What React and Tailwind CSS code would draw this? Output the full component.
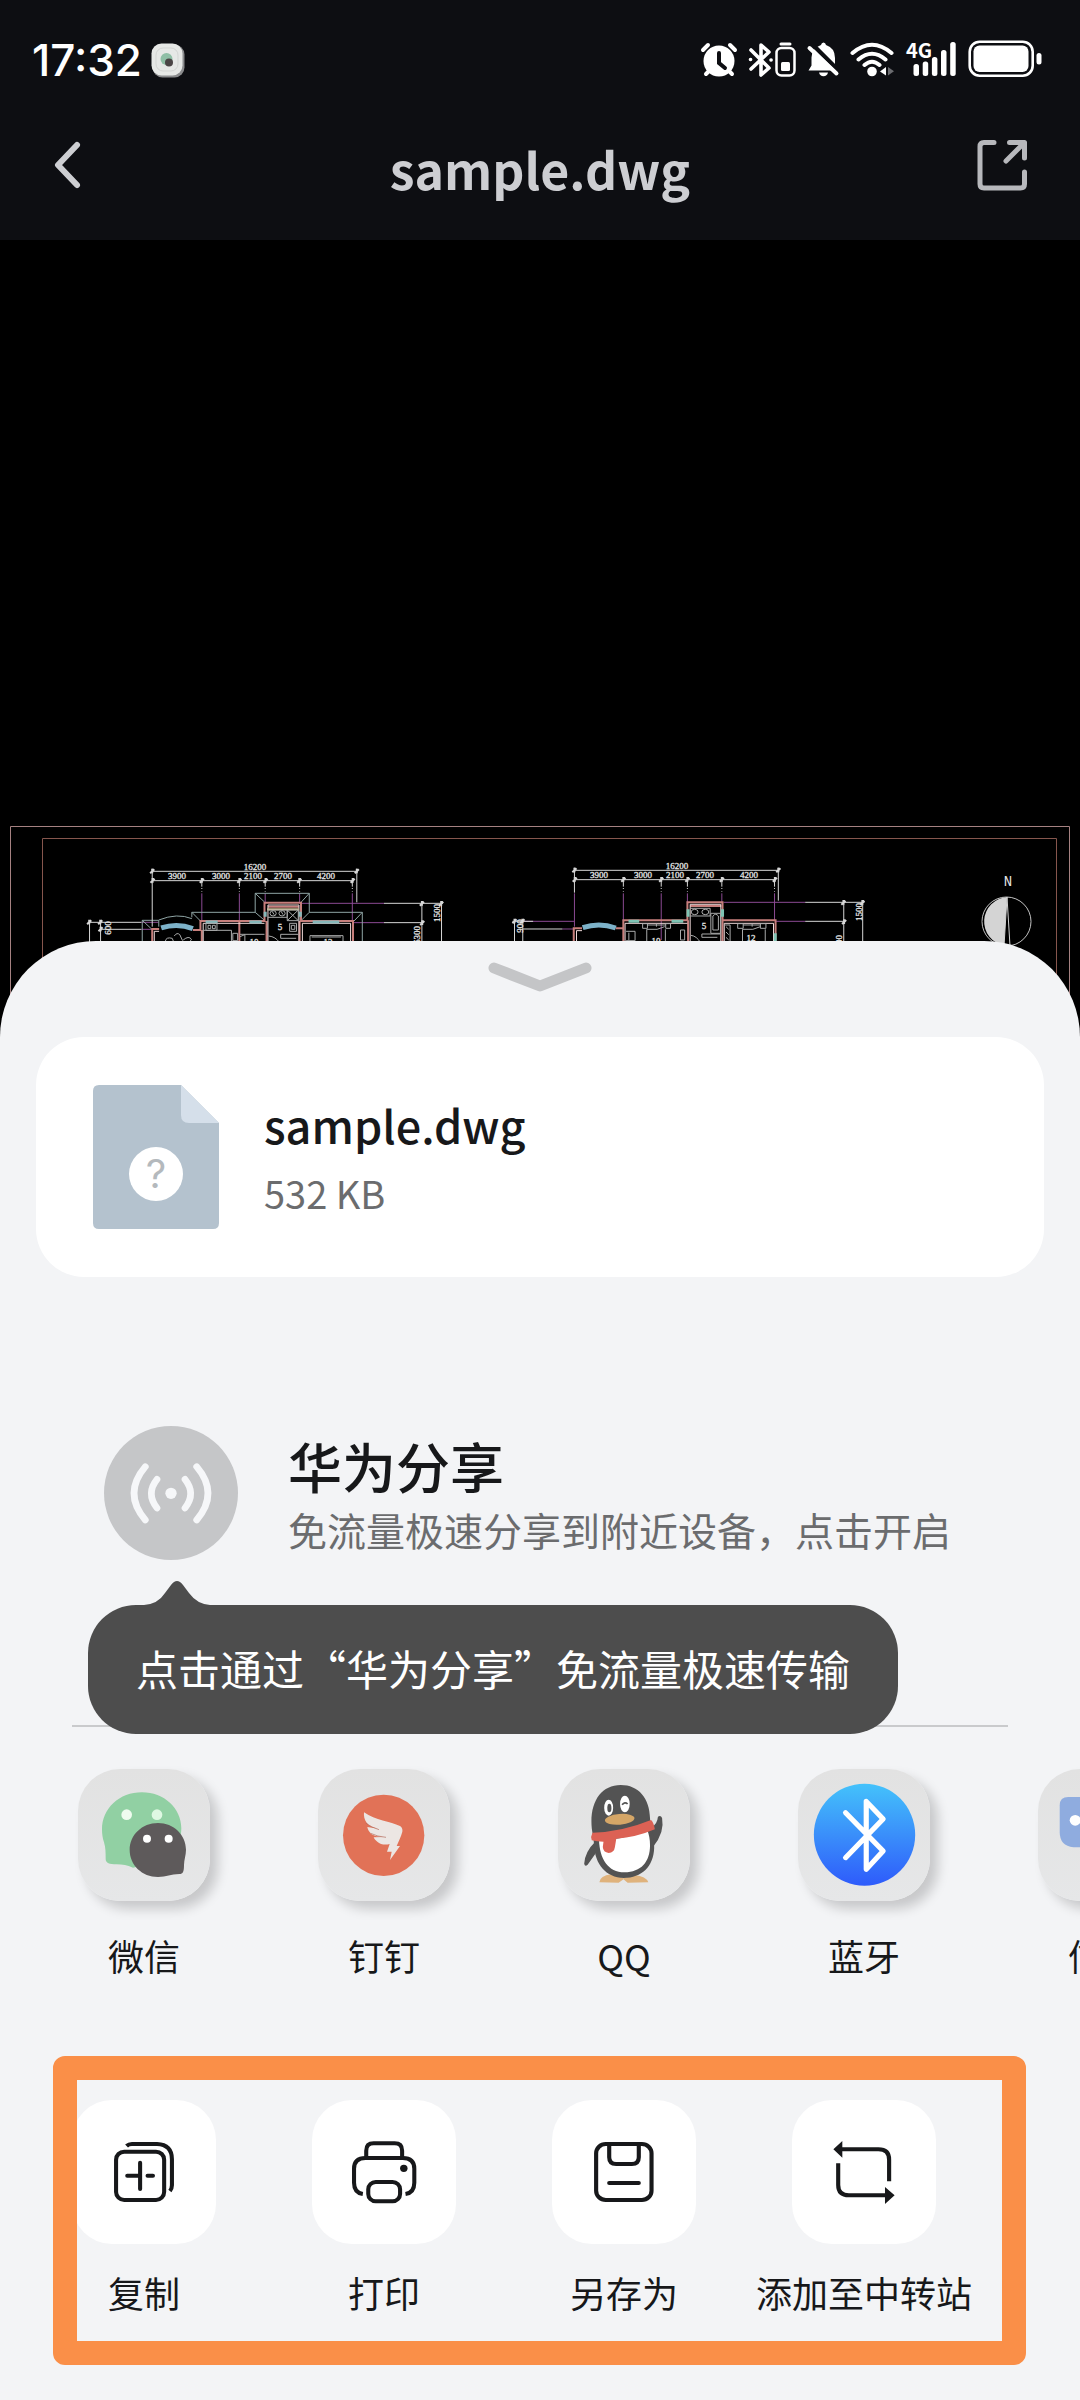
import React from "react";
import clsx from "clsx";

const line = { vectorEffect: "non-scaling-stroke" };

/* ================= STATUS BAR ================= */
const StatusIcons = () => (
  <div className="flex items-center text-white">
    <svg className="w-11 h-10" viewBox="701 39 44 40" fill="none" stroke="currentColor" strokeWidth="4" strokeLinecap="round">
      <circle cx="720" cy="60" r="15.500" fill="currentColor" stroke="none" />
      <path d="M704 49l5-5M731 44l5 5M707 73l4-4M733 73l-4-4" />
      <path d="M720 52v10l6 5" stroke="#0d0e12" />
    </svg>
    <svg className="w-14 h-10" viewBox="745 39 56 40" fill="none" stroke="currentColor" strokeWidth="3.6" strokeLinecap="round" strokeLinejoin="round">
      <path d="M752 49l18 18-8 7V44l8 7-18 17" />
      <path d="M751.500 58.500h.1M772 59h.1" />
      <rect x="777.500" y="47" width="18" height="27.500" rx="5" strokeWidth="2.500" />
      <path d="M782 43h9" strokeWidth="3" />
      <rect x="782" y="61" width="9" height="9" rx="1.500" fill="currentColor" stroke="none" />
    </svg>
    <svg className="w-11 h-10" viewBox="801 39 44 40">
      <path d="M824.500 41.500q2 0 2.500 2.500q9 3 9 13v8l3.500 4.500h-30l3-5v-8q0-9 9.500-12.500q.5-2.500 2.500-2.500z" fill="currentColor" />
      <path d="M820 71.500h9q-1 3.800-4.500 3.800t-4.500-3.800z" fill="currentColor" />
      <path d="M813 43l29 29" stroke="#0d0e12" strokeWidth="4.500" />
      <path d="M810.500 47l27 25.500" stroke="currentColor" strokeWidth="4" strokeLinecap="round" />
    </svg>
    <svg className="w-14 h-10" viewBox="845 39 56 40" fill="none" stroke="currentColor" strokeWidth="4" strokeLinecap="round">
      <path d="M853.500 52q19.500-16.500 39 0M859.500 58.500q13.500-11.500 27 0M865.500 64q7.500-6.500 15 0" />
      <circle cx="873" cy="70.500" r="4.800" fill="currentColor" stroke="none" />
      <path d="M881 70.500l6-4.500v8.500z" fill="currentColor" stroke="none" />
      <path d="M889 66v8.500l6-4.300z" fill="#6b6c70" stroke="none" />
    </svg>
    <div className="relative h-10 w-15">
      <span className="absolute left-1.5 top-0 font-['Noto_Sans_CJK_SC',sans-serif] text-xl leading-5 font-bold">4G</span>
      <svg className="h-10 w-15" viewBox="901 39 60 40" fill="currentColor">
        <rect x="914.500" y="63" width="5.500" height="12" rx="2.500" />
        <rect x="923.700" y="60.500" width="5.500" height="14.500" rx="2.500" />
        <rect x="932.900" y="56" width="5.500" height="19" rx="2.500" />
        <rect x="942" y="49" width="5.500" height="26" rx="2.500" />
        <rect x="951.200" y="41" width="5.500" height="34" rx="2.500" />
      </svg>
    </div>
    <svg className="w-21 h-10" viewBox="961 39 84 40" fill="currentColor">
      <rect x="970.700" y="40.700" width="63" height="34" rx="10" fill="none" stroke="currentColor" strokeWidth="2.600" />
      <rect x="974.500" y="44.500" width="55" height="26.500" rx="6" />
      <rect x="1037.500" y="52" width="5" height="11.500" rx="2.500" />
    </svg>
  </div>
);

const MiniAppIcon = () => (
  <svg className="w-9 h-9" viewBox="0 0 36 36">
    <rect x="2.500" y="2.500" width="32" height="33" rx="10" fill="#8b8c8e" />
    <rect x="1.500" y="1.500" width="31" height="32" rx="10" fill="#e6e8e6" />
    <rect x="6" y="6" width="22" height="23" rx="7" fill="none" stroke="#d3d5d3" />
    <circle cx="16.500" cy="17" r="6" fill="#8fbfa6" />
    <circle cx="19" cy="20.500" r="4" fill="#4b4546" />
  </svg>
);

/* ================= DRAWING ================= */
const Ticks = ({ xs, y }) =>
  xs.map((x) => <path key={x} d={`M${x - 6} ${y + 6}l12-12M${x} ${y - 8}v14`} strokeWidth="2" {...line} />);

const DimText = ({ items }) =>
  items.map(([x, y, text, rotate]) => (
    <text key={`${x}-${y}`} textAnchor="middle" transform={`translate(${x} ${y}) rotate(${rotate || 0})`}>
      {text}
    </text>
  ));

const Drawing = () => (
  <svg className="block w-full" viewBox="0 240 1080 797" fill="none">
    <path d="M10.500 1037V826.500H1069.500V1037" stroke="#a58181" />
    <path d="M42.500 1037V838.500H1056.500V1037" stroke="#86564d" />

    {/* left plan */}
    <g transform="translate(0 810) scale(.3444 .3333)">
      <g stroke="#8b4a93" strokeWidth="1">
        <path d="M586 250V333M695 250V390M770 250V280M870 250V280M1023 250V333M875 280H1115M1028 338H1115M410 337H460M410 358H442" {...line} />
      </g>
      <g stroke="#8fa5a5" strokeWidth="1">
        <path d="M413 400V331H461V350M461 330Q515 308 557 326M557 322V307H741V250H898V307H1052V400M741 250L768 276M898 250L875 276M557 307L582 333M1052 307L1028 333M413 331L440 357M741 307L768 331M898 307L875 331" {...line} />
      </g>
      <g stroke="#c77f7c" strokeWidth="2">
        <path d="M442 400V357H462M560 360H582V333H768V278H874V333H1025V400M586 360V400M695 333V400M774 333V400M870 333V400M778 290H868" {...line} />
      </g>
      <g stroke="#f0dada" strokeWidth="1">
        <path d="M448 400V364H462M590 400V340H768M778 400V285H868V400M878 400V340H1018V400" {...line} />
      </g>
      <path d="M468 354Q515 338 560 356" stroke="#7db2c9" strokeWidth="5" {...line} />
      <path d="M597 336H632M724 336H760M908 336H985M770 305V320M872 305V320" stroke="#86b7b9" strokeWidth="3" {...line} />
      <path d="M776 298H868" stroke="#d9c79a" strokeWidth="2" {...line} />
      <g stroke="#a9aaaa" strokeWidth="1">
        <path d="M598 340H630V361H598zM604 346h8v10h-8zM617 346h8v10h-8zM590 361H672V395M676 370H690V392H676zM697 373H768M778 300H834V322H778M834 300H866V332H834zM834 300L866 332M866 300L834 332M841 340H861V364H841zM846 346h10v12h-10zM815 373H866M815 373V385H860M780 378Q800 380 812 398M900 400V377H996V400M905 381H990M480 394Q482 380 500 385L506 400M506 378Q514 366 522 374L530 392M532 390Q548 376 556 388L548 400" {...line} />
        <ellipse cx="793" cy="310" rx="9" ry="8" {...line} />
        <ellipse cx="819" cy="310" rx="9" ry="8" {...line} />
        <path d="M697 380l14-6v20M790 304l6 10M816 304l6 10" {...line} />
      </g>
      <g stroke="#d6d6d6" strokeWidth="1">
        <path d="M442 184H1036M442 212H1025M442 176V350M1036 176V277M586 212V230M695 212V230M770 212V230M870 212V230M1023 212V230M1115 280H1286M1115 338H1228M1225 280V400M1282 280V400M255 337H410M290 358H410M260 337V400M292 337V400" {...line} />
        <path d="M586 234V245M695 234V245M770 234V245M870 234V245M1023 234V245" strokeDasharray="1 2" {...line} />
        <Ticks xs={[442, 1036]} y={184} />
        <Ticks xs={[443, 586, 695, 771, 869, 1024]} y={212} />
        <Ticks xs={[1225, 1281]} y={281} />
        <Ticks xs={[1226]} y={339} />
        <Ticks xs={[259, 291]} y={337} />
        <Ticks xs={[292]} y={358} />
      </g>
    </g>

    {/* right plan */}
    <g transform="translate(540 810) scale(.3444 .3333)">
      <g stroke="#8b4a93" strokeWidth="1">
        <path d="M100 250V350M242 250V333M352 250V390M428 250V280M528 250V280M681 250V333M533 277H770M685 334H770M0 334H100M65 357H100M-50 334H0" {...line} />
      </g>
      <g stroke="#c77f7c" strokeWidth="2">
        <path d="M98 400V355H122M220 355H242V331H428V277H530V331H684V400M242 331V400M430 331V400M530 331V400M436 288H526" {...line} />
      </g>
      <g stroke="#f0dada" strokeWidth="1">
        <path d="M106 400V362H122M247 400V340H428M436 400V283H525V400M535 400V340H678V400" {...line} />
      </g>
      <path d="M124 353Q172 336 220 354" stroke="#7db2c9" strokeWidth="5" {...line} />
      <path d="M257 334H288M382 334H416M430 298V320M530 298V320M683 370V400" stroke="#7fc4b4" strokeWidth="3" {...line} />
      <g stroke="#a9aaaa" strokeWidth="1">
        <path d="M436 295H494V318H436M496 310H524V370H496zM502 318Q510 308 518 318V360H502zM470 372H524M470 372V382H515M438 376Q455 378 466 398M250 364H276V392H250M258 368V390M298 341H312V355H298zM365 341H379V355H365zM312 345H365M310 400V358H340L362 350M364 358V400M574 341H590V355H574zM640 341H656V355H640zM590 345H640M588 400V358H618L640 350M654 358V400M408 360H420V390H408zM536 345H552V400M540 350l8 8M540 366l8 8M540 382l8 8M338 341V350M616 341V350" {...line} />
        <ellipse cx="449" cy="306" rx="10" ry="8" {...line} />
        <ellipse cx="480" cy="306" rx="10" ry="8" {...line} />
      </g>
      <g stroke="#d6d6d6" strokeWidth="1">
        <path d="M100 181H692M100 209H681M100 173V248M692 173V272M242 209V230M352 209V230M428 209V230M528 209V230M681 209V230M770 277H942M770 334H886M882 277V400M937 277V400M-80 334H-20M-50 357H65M-74 334V400M-50 334V400" {...line} />
        <path d="M242 234V245M352 234V245M428 234V245M528 234V245M681 234V245" strokeDasharray="1 2" {...line} />
        <Ticks xs={[100, 692]} y={181} />
        <Ticks xs={[101, 242, 352, 428, 528, 682]} y={209} />
        <Ticks xs={[881, 936]} y={278} />
        <Ticks xs={[883]} y={336} />
        <Ticks xs={[-74, -51]} y={334} />
      </g>
    </g>

    <g className="font-['Liberation_Serif',serif] text-[9px]" fill="#e4e4e4" stroke="#e4e4e4" strokeWidth=".3">
      <DimText
        items={[
          [255, 870, "16200"],
          [177, 879, "3900"],
          [221, 879, "3000"],
          [253, 879, "2100"],
          [283, 879, "2700"],
          [326, 879, "4200"],
          [440, 913, "1500", -90],
          [420, 935, "6300", -90],
          [111, 928, "600", -90],
          [280, 930, "5"],
          [254, 945, "10"],
          [328, 945, "12"],
          [677, 869, "16200"],
          [599, 878, "3900"],
          [643, 878, "3000"],
          [675, 878, "2100"],
          [705, 878, "2700"],
          [749, 878, "4200"],
          [862, 912, "1500", -90],
          [842, 944, "6300", -90],
          [523, 926, "900", -90],
          [704, 929, "5"],
          [656, 944, "10"],
          [751, 941, "12"],
        ]}
      />
    </g>
    <text x="1008" y="886" textAnchor="middle" className="font-['Liberation_Mono',monospace] text-sm" fill="#e4e4e4">N</text>

    {/* compass */}
    <path d="M1007 897A24.500 24.500 0 0 0 1004 945.500z" fill="#d4d4d4" />
    <circle cx="1006.500" cy="921.500" r="24.500" stroke="#c4c4c4" />
    <path d="M1007 897L1010 946M1007 897L1004 946" stroke="#d4d4d4" />
  </svg>
);

/* ================= SHARE TARGETS ================= */
const WechatIcon = () => (
  <svg className="size-full" viewBox="85 87 396 396">
    <path d="M277 157c66 0 118 48 118 108s-50 114-118 114c-12 0-18 4-27 4-18-7-30-10-50-10-20 0-32-4-32-16 0-18 0-34-5-50-4-12-6-26-6-38 0-64 52-112 120-112z" fill="#91d0a3" />
    <circle cx="231" cy="224" r="16" fill="#effbef" />
    <circle cx="322" cy="224" r="16" fill="#dff8e3" />
    <path d="M325 249c47 0 84 36 84 80 0 16-6 30-6 46 0 20-3 27-14 27-26 0-38 9-64 9-48 0-85-36-85-81s37-81 85-81z" fill="#5e5a5b" />
    <circle cx="292" cy="296" r="12" fill="#fff" />
    <circle cx="357" cy="296" r="12" fill="#fff" />
  </svg>
);

const DingTalkIcon = () => (
  <svg className="size-full" viewBox="804 87 396 396">
    <circle cx="1001" cy="286" r="122" fill="#e17257" />
    <path d="M942 217c35 24 79 28 108 41q9 6 7 17c-4 16-11 28-17 43h10l-30 42 5-25h-14l8-23c-14 4-28 1-37-7-6-4-9-8-11-13l34-1c-18-1-31-2-42-10-6-6-10-13-11-20l34 5c-17-4-29-8-36-18-7-9-9-20-8-31z" fill="#ece6e3" />
    <path d="M947 249q18 14 40 20M962 280q20 10 46 12" stroke="#b06a5a" strokeWidth="2" fill="none" />
  </svg>
);

const QQIcon = () => (
  <svg className="size-full" viewBox="52 87 383 396" preserveAspectRatio="none">
    <path d="M172 427q2-20 34-24l36 12 32-10q34 4 40 22l-60 1-12-10-14 10z" fill="#dfb27c" />
    <path d="M160 305q-30 30-32 66 2 10 10 3l22-32zM322 262q18-8 20-32 8-6 12 4 8 44-26 86z" fill="#535353" />
    <path d="M234 135c52 0 84 40 85 100 0 20 14 50 12 90-2 55-36 89-88 89s-84-44-86-95c-1-30-8-44-8-74 0-66 32-110 85-110z" fill="#535353" />
    <path d="M171 300q70 0 140-30 8 20 8 46c0 50-26 81-74 81s-72-40-74-97z" fill="#fff" />
    <path d="M152 278q85-2 170-38 8 8 11 28-54 24-112 28-2 14-4 26-2 16-18 17-16-2-17-18l2-16q-20 0-34-4-4-12 2-23z" fill="#dc6154" />
    <ellipse cx="199" cy="203" rx="13" ry="24" fill="#fff" />
    <ellipse cx="246" cy="192" rx="14" ry="25" fill="#fff" />
    <ellipse cx="201" cy="204" rx="6" ry="13" fill="#535353" />
    <path d="M238 194q8-10 16-2" stroke="#535353" strokeWidth="5" fill="none" />
    <ellipse cx="231" cy="238" rx="43" ry="16" fill="#d5a667" transform="rotate(-5 231 238)" />
  </svg>
);

const BluetoothIcon = () => (
  <svg className="size-full" viewBox="748 87 383 396" preserveAspectRatio="none">
    <defs>
      <linearGradient id="bt" x1="0" y1="0" x2="0" y2="1">
        <stop offset="0" stopColor="#44c2fb" />
        <stop offset=".5" stopColor="#3a8ffa" />
        <stop offset="1" stopColor="#2e5bfb" />
      </linearGradient>
    </defs>
    <ellipse cx="941" cy="284" rx="147" ry="153" fill="url(#bt)" />
    <path d="M886 218L995 333L946 388V184L995 237L886 353" fill="none" stroke="#fff" strokeWidth="15" strokeLinecap="round" strokeLinejoin="round" />
  </svg>
);

const MessageIcon = () => (
  <svg className="size-full" viewBox="1447 87 383 396" preserveAspectRatio="none">
    <path d="M1535 171H1742q25 0 25 25V282q0 40-40 40H1550q-40-4-40-45V196q0-25 25-25z" fill="#8facdf" />
    <circle cx="1555" cy="241" r="16" fill="#fff" />
    <circle cx="1638" cy="241" r="16" fill="#fff" />
    <circle cx="1721" cy="241" r="16" fill="#fff" />
  </svg>
);

const shareApps = [
  { name: "微信", Icon: WechatIcon },
  { name: "钉钉", Icon: DingTalkIcon },
  { name: "QQ", Icon: QQIcon },
  { name: "蓝牙", Icon: BluetoothIcon },
  { name: "信息", Icon: MessageIcon },
];

/* ================= ACTIONS ================= */
const ActionSvg = ({ viewBox, children }) => (
  <svg className="size-16 overflow-visible" viewBox={viewBox} preserveAspectRatio="none" fill="none" stroke="#17181a" strokeWidth="12" strokeLinecap="round">
    {children}
  </svg>
);

const CopyIcon = () => (
  <ActionSvg viewBox="243 300 189 192">
    <rect x="255" y="335" width="142" height="145" rx="24" />
    <path d="M326 368V447M288 407H326M348 407H364" />
    <path d="M286 318q6-6 16-6H376q44 2 44 46V436q0 10-6 17" strokeLinecap="butt" />
  </ActionSvg>
);

const PrintIcon = () => (
  <ActionSvg viewBox="952 300 189 192">
    <path d="M994 350V332q0-22 22-22H1078q22 0 22 22V350" />
    <path d="M984 462q-26-4-26-34V386q0-32 34-32H1102q34 0 34 32V428q0 30-26 34" strokeLinecap="butt" />
    <rect x="1000" y="426" width="94" height="58" rx="22" />
    <circle cx="1105" cy="385" r="11" fill="#17181a" stroke="none" />
  </ActionSvg>
);

const SaveIcon = () => (
  <ActionSvg viewBox="151 300 186 192">
    <rect x="163" y="312" width="161" height="168" rx="28" />
    <path d="M201 314V352q0 20 20 20H267q20 0 20-20V314M201 429H287" />
  </ActionSvg>
);

const TransferIcon = () => (
  <ActionSvg viewBox="853 300 186 192">
    <path d="M880 328H988q31 0 31 31V424M1010 466H902q-31 0-31-31V370" strokeLinecap="butt" />
    <path d="M857 328L883 303V353zM1035 466L1007 441V492z" fill="#17181a" stroke="none" />
  </ActionSvg>
);

const actions = [
  { name: "复制", Icon: CopyIcon },
  { name: "打印", Icon: PrintIcon },
  { name: "另存为", Icon: SaveIcon },
  { name: "添加至中转站", Icon: TransferIcon },
];

const IconButton = ({ name, Icon, tile, className }) => (
  <button type="button" className={clsx("flex flex-col items-center", className)}>
    <span className={tile}>
      <Icon />
    </span>
    <span className="text-4xl leading-[60px] whitespace-nowrap">{name}</span>
  </button>
);

export default function App() {
  return (
    <div lang="zh-CN" className="flex min-h-screen flex-col overflow-hidden bg-black font-['Noto_Sans_CJK_SC',sans-serif] text-[#17181a]">
      <header className="h-60 bg-[#0d0e12]">
        <div className="flex items-center justify-between pt-9 pl-8 pr-9">
          <div className="flex items-center gap-2">
            <span className="font-['Inter',sans-serif] text-[44px] leading-[48px] font-medium text-white">17:32</span>
            <MiniAppIcon />
          </div>
          <StatusIcons />
        </div>
        <div className="mt-11 flex items-center justify-between px-12">
          <button type="button" aria-label="返回" className="size-14">
            <svg className="size-14" viewBox="0 0 56 56" fill="none" stroke="#cdced2" strokeWidth="6" strokeLinecap="round" strokeLinejoin="round">
              <path d="M29 5L10 25L29 45" />
            </svg>
          </button>
          <h1 className="text-[50px] leading-[80px] font-bold text-[#cdced2]">sample.dwg</h1>
          <button type="button" aria-label="打开方式" className="size-14">
            <svg className="size-14" viewBox="976 140 56 56" fill="none" stroke="#b7b8bc" strokeWidth="5" strokeLinecap="round" strokeLinejoin="round">
              <path d="M994 142.500H984q-4 0-4 4V184q0 4 4 4H1020.500q4 0 4-4V172M1009.500 142.500H1024.500V158M1006 161L1023 144" />
            </svg>
          </button>
        </div>
      </header>

      <Drawing />

      <section className="relative -mt-24 flex-1 rounded-t-[96px] bg-gray-100 pb-9">
        <button type="button" aria-label="收起" className="mx-auto block pt-5">
          <svg className="h-8 w-28" viewBox="0 0 112 32" fill="none" stroke="#c4c5c7" strokeWidth="11" strokeLinecap="round" strokeLinejoin="round">
            <path d="M10 7L56 25L102 7" />
          </svg>
        </button>

        {/* file card */}
        <div className="mx-9 mt-11 flex h-60 items-center rounded-[48px] bg-white pl-[57px]">
          <div className="relative h-36 w-[126px]">
            <svg className="size-full" viewBox="0 0 126 144">
              <path d="M6 0H88L126 38V138q0 6-6 6H6q-6 0-6-6V6q0-6 6-6z" fill="#b4c2ce" />
              <path d="M88 0L126 38H96q-8 0-8-8z" fill="#d5dfea" />
            </svg>
            <span className="absolute bottom-7 left-9 flex size-[54px] items-center justify-center rounded-full bg-white font-['Inter',sans-serif] text-[40px] leading-none text-[#b4b9bd]">
              ?
            </span>
          </div>
          <div className="ml-[45px]">
            <p className="text-[45px] leading-[72px] font-medium">sample.dwg</p>
            <p className="text-[38px] leading-[64px] text-[#6b6c6e]">532 KB</p>
          </div>
        </div>

        {/* nearby share */}
        <div className="relative mx-[72px] mt-[149px] h-[301px] border-b-2 border-[#c9cacc]">
          <button type="button" className="flex items-center pl-8 text-left">
            <svg className="size-[134px]" viewBox="131 78 402 402" fill="none" stroke="#f6f7f9" strokeWidth="20" strokeLinecap="round">
              <circle cx="332" cy="279" r="201" fill="#c5c6c8" stroke="none" />
              <circle cx="332" cy="280" r="17" fill="#f6f7f9" stroke="none" />
              <path d="M290 238q-34 42 0 86M374 238q34 42 0 86M255 200q-68 80 0 160M409 200q68 80 0 160" />
            </svg>
            <span className="ml-[50px] flex flex-col">
              <span className="text-[54px] leading-[72px] font-medium">华为分享</span>
              <span className="text-[39px] leading-[54px] text-[#6b6c6e]">免流量极速分享到附近设备，点击开启</span>
            </span>
          </button>
          <div role="tooltip" className="absolute top-[179px] left-4 rounded-[48px] bg-[#4d4d4d] px-12 pt-[31px] pb-[34px] text-[42px] leading-[64px] whitespace-nowrap text-white">
            <svg className="absolute -top-6 left-14 h-[25px] w-[66px]" viewBox="0 0 66 25" fill="#4d4d4d">
              <path d="M0 25V24Q14 23 21 12L27 4Q33-4 39 4L45 12Q53 23 66 24V25z" />
            </svg>
            点击通过“华为分享”免流量极速传输
          </div>
        </div>

        {/* share targets */}
        <div className="mt-6 flex overflow-hidden pt-[18px] pl-6">
          {shareApps.map(({ name, Icon }) => (
            <IconButton
              key={name}
              name={name}
              Icon={Icon}
              className="w-60 flex-none"
              tile="mb-6 size-[132px] rounded-[42px] bg-linear-to-b from-[#e2e2e2] to-[#e6e7e8] shadow-[8px_8px_12px_rgba(0,0,0,0.18)]"
            />
          ))}
        </div>

        {/* actions */}
        <div className="relative mt-[71px] pt-11 pb-[43px] pr-24 pl-6">
          <div className="grid grid-cols-4">
            {actions.map(({ name, Icon }) => (
              <IconButton
                key={name}
                name={name}
                Icon={Icon}
                tile="mb-[18px] flex size-36 items-center justify-center rounded-[40px] bg-white"
              />
            ))}
          </div>
          <div className="pointer-events-none absolute inset-y-0 right-[54px] left-[53px] rounded-xl border-24 border-[#fa8f48]" />
        </div>
      </section>
    </div>
  );
}
